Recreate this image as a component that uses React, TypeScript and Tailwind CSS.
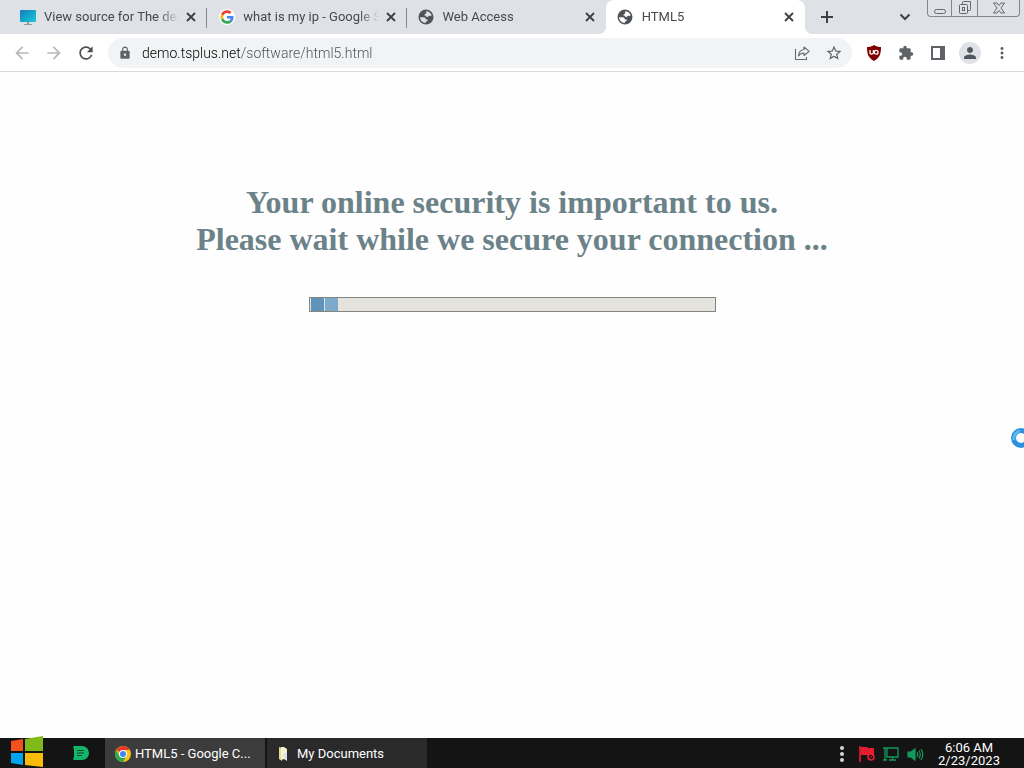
import type { ReactNode } from 'react'
import { MdArrowBack, MdArrowForward, MdExtension, MdLock, MdMoreVert, MdPerson, MdRefresh, MdStarBorder } from 'react-icons/md'

function MonitorIcon() {
  return (
    <svg width="16" height="16" viewBox="0 0 16 16">
      <defs>
        <linearGradient id="screen" x1="0" y1="0" x2="1" y2="1">
          <stop offset="0" stopColor="#1a78bd" />
          <stop offset="0.5" stopColor="#12a5c9" />
          <stop offset="1" stopColor="#1fc4d6" />
        </linearGradient>
      </defs>
      <rect x="0" y="1" width="16" height="12" rx="1" fill="url(#screen)" />
      <path d="M7 13h2v2h3v1H4v-1h3z" fill="#8f9aa5" />
    </svg>
  )
}

function GoogleIcon() {
  return (
    <svg width="16" height="16" viewBox="0 0 48 48">
      <circle cx="24" cy="24" r="24" fill="#fff" />
      <g transform="translate(4 4) scale(0.84)">
        <path fill="#EA4335" d="M24 9.5c3.5 0 6.700 1.200 9.200 3.600l6.900-6.900C35.900 2.400 30.500 0 24 0 14.600 0 6.500 5.400 2.600 13.200l8 6.200C12.400 13.700 17.700 9.500 24 9.500z" />
        <path fill="#4285F4" d="M47 24.500c0-1.600-.2-3.100-.4-4.500H24v9h12.900c-.6 3-2.200 5.500-4.700 7.200l7.700 6C44.400 38 47 31.800 47 24.500z" />
        <path fill="#FBBC05" d="M10.500 28.600A14.500 14.500 0 0 1 10.500 19.400l-8-6.200a24 24 0 0 0 0 21.600z" />
        <path fill="#34A853" d="M24 48c6.500 0 11.900-2.100 15.900-5.800l-7.700-6c-2.200 1.500-4.900 2.300-8.200 2.300-6.300 0-11.600-4.200-13.500-9.900l-8 6.200C6.500 42.600 14.600 48 24 48z" />
      </g>
    </svg>
  )
}

function GlobeIcon({ land }: { land: string }) {
  return (
    <svg width="16" height="16" viewBox="0 0 16 16" className="-ml-[2px]">
      <circle cx="8" cy="8" r="7.500" fill="#505357" />
      <path d="M8.200 2.200c2.600.1 4.700 1.700 5.500 4-.8 1-1.900 1-2.700.4-.5 1.300-1.400 1.500-2.600 1.300-.2-1-.8-1.400-2-1.400.2-1.200.8-1.800 1.900-2z" fill={land} />
      <path d="M2.100 8.200h3.300c1.700 0 2.400.9 2.400 2.200h2c0 1.400-.7 2-2 2.200v1.300c-3.100 0-5.600-2.500-5.700-5.700z" fill={land} />
    </svg>
  )
}

function CloseIcon() {
  return (
    <svg width="10" height="10" viewBox="0 0 10 10" stroke="currentColor" strokeWidth="1.800">
      <path d="M1 1l8 8M9 1L1 9" />
    </svg>
  )
}

function PlusIcon() {
  return (
    <svg width="12" height="12" viewBox="0 0 12 12" stroke="currentColor" strokeWidth="2">
      <path d="M6 0v12M0 6h12" />
    </svg>
  )
}

function ChevronIcon() {
  return (
    <svg width="12" height="8" viewBox="0 0 12 8" fill="none" stroke="currentColor" strokeWidth="2">
      <path d="M1.500 1.500L6 6l4.500-4.500" />
    </svg>
  )
}

function ShareIcon() {
  return (
    <svg width="16" height="16" viewBox="0 0 16 16" fill="none" stroke="#65696f" strokeWidth="1.100">
      <path d="M1.500 4v10.500h11V12" />
      <path d="M4.500 11c.3-3.800 2.300-6.200 5.500-6.500V2l5.200 4.300L10 10.500V8c-2.400 0-4.200.9-5.500 3z" strokeLinejoin="round" />
    </svg>
  )
}

function ShieldIcon() {
  return (
    <svg width="16" height="18" viewBox="0 0 16 18">
      <path d="M8 1c2 1.500 4.300 2 7 2 0 6.500-1 10.500-7 14-6-3.500-7-7.500-7-14 2.700 0 5-.5 7-2z" fill="#800000" />
      <g fill="none" stroke="#fff" strokeWidth="1.300">
        <path d="M4 6v2.500a1.700 1.700 0 0 0 3.400 0V6" />
        <circle cx="10.200" cy="8.300" r="1.900" />
      </g>
    </svg>
  )
}

function SidePanelIcon() {
  return (
    <svg width="16" height="16" viewBox="0 0 16 16">
      <rect x="2" y="2" width="12" height="12" fill="none" stroke="#5f6368" strokeWidth="2" />
      <rect x="10" y="2" width="4" height="12" fill="#5f6368" />
    </svg>
  )
}

function WindowsLogo() {
  return (
    <svg width="34" height="32" viewBox="0 0 34 32" className="-mt-[2px]">
      <path d="M1 5l12-2v12H1z" fill="#f1511b" />
      <path d="M15 3l18-3v15H15z" fill="#80b918" />
      <path d="M1 17h12v12L1 27z" fill="#00a4ef" />
      <path d="M15 17h18v14l-18-2z" fill="#fbbc09" />
    </svg>
  )
}

function ChromeIcon() {
  return (
    <svg width="16" height="16" viewBox="0 0 16 16">
      <circle cx="8" cy="8" r="8" fill="#fbc116" />
      <path d="M8 8L1.100 4A8 8 0 0 1 14.900 4H8z" fill="#e33b2e" />
      <path d="M1.100 4A8 8 0 0 0 8 16l3.500-6H4.500z" fill="#2da94f" />
      <circle cx="8" cy="8" r="4" fill="#fff" />
      <circle cx="8" cy="8" r="3" fill="#4285f4" />
    </svg>
  )
}

function FolderIcon() {
  return (
    <svg width="16" height="16" viewBox="0 0 16 16">
      <path d="M4 1l3 1v13l-3-2z" fill="#e3df8e" />
      <path d="M6 1h3l3 2v11l-3-1-3 1z" fill="#f4f5d0" />
      <path d="M8 8l4-2v9l-3-2z" fill="#dbe3ea" />
    </svg>
  )
}

function TrayFlag() {
  return (
    <svg width="18" height="18" viewBox="0 0 18 18">
      <path d="M1 1h2v16H1z" fill="#c8182c" />
      <path d="M3 2h6l1 1h6v8h-6l-1-1H3z" fill="#e81c30" />
      <circle cx="13" cy="12" r="3" fill="#141414" stroke="#e81c30" strokeWidth="1.500" />
      <path d="M11 14l4-4" stroke="#e81c30" />
    </svg>
  )
}

function TrayNetwork() {
  return (
    <svg width="18" height="18" viewBox="0 0 18 18" fill="none" stroke="#159a5c" strokeWidth="1.300">
      <path d="M5 3h11v9H5zM1 3h4M3 3v3M3 6v9M1 15h4M10.500 12v3M7 15h7" />
    </svg>
  )
}

function TraySound() {
  return (
    <svg width="18" height="18" viewBox="0 0 18 18" fill="none" stroke="#159a5c" strokeWidth="1.200">
      <path d="M2 7h3l4-3v11l-4-3H2z" fill="#159a5c" />
      <path d="M11 7q1.500 2.500 0 5M13 5.500q2.500 4 0 8M15 4q3.500 5.500 0 11" />
    </svg>
  )
}

const tabs = [
  { title: 'View source for The demo', icon: <MonitorIcon /> },
  { title: 'what is my ip - Google Search', icon: <GoogleIcon /> },
  { title: 'Web Access', icon: <GlobeIcon land="#dee1e6" /> },
  { title: 'HTML5', icon: <GlobeIcon land="#ffffff" />, active: true },
]

function TabStrip() {
  return (
    <header className="flex h-[34px] items-stretch bg-[#dee1e6] pl-2">
      <div role="tablist" className="flex min-w-0 flex-[0_1_797px]">
        {tabs.map((tab, i) => (
          <div
            key={tab.title}
            className={tab.active
              ? 'relative flex min-w-0 flex-1 items-center rounded-t-lg bg-white pr-2 pl-3'
              : 'relative flex min-w-0 flex-1 items-center pr-2 pl-3'}
          >
            <button role="tab" aria-selected={!!tab.active} className="flex min-w-0 flex-1 items-center gap-2 text-left">
              <span className="flex w-4 shrink-0 justify-center">{tab.icon}</span>
              <span className="flex-1 overflow-hidden mask-r-from-85% text-[13px] leading-5 whitespace-nowrap text-[#45494d]">{tab.title}</span>
            </button>
            <button aria-label="Close tab" className="ml-1 flex w-4 shrink-0 justify-center text-[#3c4043]">
              <CloseIcon />
            </button>
            {i < 2 && <span className="absolute top-2 right-0 h-5 w-px bg-[#85898e]" />}
            {tab.active && (
              <>
                <span className="absolute bottom-0 -left-2 size-2 bg-[radial-gradient(circle_at_0_0,transparent_8px,white_8px)]" />
                <span className="absolute -right-2 bottom-0 size-2 bg-[radial-gradient(circle_at_100%_0,transparent_8px,white_8px)]" />
              </>
            )}
          </div>
        ))}
      </div>
      <button aria-label="New tab" className="ml-3 flex w-5 items-center justify-center text-[#3c4043]">
        <PlusIcon />
      </button>
      <div className="flex-1" />
      <button aria-label="Search tabs" className="mr-3 flex w-5 items-center justify-center text-[#3c4043]">
        <ChevronIcon />
      </button>
      <div className="mr-1 flex h-[17px] w-[93px] rounded-b-sm border border-t-0 border-[#85898e] text-[#64686e]">
        <button aria-label="Minimize" className="flex w-6 items-center justify-center border-r border-[#85898e]">
          <svg width="12" height="14" viewBox="0 0 12 14" fill="none" stroke="currentColor">
            <rect x="0.500" y="8.500" width="11" height="4" rx="2" />
          </svg>
        </button>
        <button aria-label="Restore" className="flex w-[26px] items-center justify-center border-r border-[#85898e]">
          <svg width="14" height="14" viewBox="0 0 14 14" fill="none" stroke="currentColor">
            <path d="M4.500 3.500v-2a1 1 0 0 1 1-1h7v8a1 1 0 0 1-1 1h-2" />
            <rect x="1.500" y="3.500" width="8" height="9" rx="1" />
            <rect x="4.500" y="6.500" width="2" height="3" />
          </svg>
        </button>
        <button aria-label="Close" className="flex flex-1 items-center justify-center">
          <svg width="12" height="12" viewBox="0 0 12 12" fill="none" stroke="currentColor">
            <path d="M.5 1h3.500l2 2.500L8 1h3.500L8 6l3.500 5H8L6 8.500 4 11H.5L4 6z" />
          </svg>
        </button>
      </div>
    </header>
  )
}

function ToolButton({ label, children }: { label: string; children: ReactNode }) {
  return (
    <button aria-label={label} className="flex size-8 shrink-0 items-center justify-center text-[#5f6368]">
      {children}
    </button>
  )
}

function Toolbar() {
  return (
    <nav className="flex h-[38px] items-center border-b border-[#d8dadd] bg-white px-[6px]">
      <ToolButton label="Back"><MdArrowBack size={20} className="text-[#b4b7bb]" /></ToolButton>
      <ToolButton label="Forward"><MdArrowForward size={20} className="text-[#b4b7bb]" /></ToolButton>
      <ToolButton label="Reload"><MdRefresh size={20} className="text-[#4c5054]" /></ToolButton>
      <div className="mx-[6px] flex h-[30px] min-w-0 flex-1 items-center rounded-full bg-[#f1f3f4] pr-[2px] pl-[10px]">
        <MdLock size={14} className="mr-[10px] shrink-0 text-[#5f6368]" />
        <input
          aria-label="Address"
          defaultValue="demo.tsplus.net/software/html5.html"
          className="min-w-0 flex-1 bg-linear-to-r from-black from-[99px] to-[#4a4e53] to-[99px] bg-clip-text text-sm font-light text-transparent outline-none"
        />
        <ToolButton label="Share"><ShareIcon /></ToolButton>
        <ToolButton label="Bookmark"><MdStarBorder size={18} /></ToolButton>
      </div>
      <ToolButton label="uBlock"><ShieldIcon /></ToolButton>
      <ToolButton label="Extensions"><MdExtension size={16} /></ToolButton>
      <ToolButton label="Side panel"><SidePanelIcon /></ToolButton>
      <ToolButton label="Profile">
        <span className="flex size-[22px] items-center justify-center rounded-full bg-[#dee1e6]">
          <MdPerson size={18} className="text-[#50565e]" />
        </span>
      </ToolButton>
      <ToolButton label="Menu"><MdMoreVert size={18} /></ToolButton>
    </nav>
  )
}

function Taskbar() {
  return (
    <footer className="flex h-[30px] items-center bg-[#141414] text-white">
      <button aria-label="Start" className="ml-[10px]"><WindowsLogo /></button>
      <button aria-label="Dashboard" className="flex w-[61px] justify-center pl-[12px]">
        <svg width="16" height="14" viewBox="0 0 16 14">
          <path d="M1 0h8a7 7 0 0 1 0 14H1l-1-1 1-2V3L0 1z" fill="#12b76a" />
          <path d="M4 4.500h7M4 7h7M4 9.500h5" stroke="#14432e" strokeWidth="1.200" />
        </svg>
      </button>
      <button className="flex h-full w-40 items-center gap-1 bg-[#3c3c3c] px-[10px] pt-px text-[13px] whitespace-nowrap">
        <ChromeIcon />
        HTML5 - Google C...
      </button>
      <button className="ml-[2px] flex h-full w-40 items-center gap-[6px] bg-[#2a2a2a] px-2 pt-px text-[13px]">
        <FolderIcon />
        My Documents
      </button>
      <div className="flex-1" />
      <div className="flex items-center gap-[6px] pt-[2px]">
        <svg width="6" height="18" viewBox="0 0 6 18" fill="#d6d6d6" className="mr-[7px]">
          <circle cx="3" cy="3" r="2" />
          <circle cx="3" cy="9" r="2" />
          <circle cx="3" cy="15" r="2" />
        </svg>
        <TrayFlag />
        <TrayNetwork />
        <TraySound />
      </div>
      <div className="mr-5 ml-[10px] w-[70px] pt-px text-center text-[13px] leading-[13px]">
        <div>6:06 AM</div>
        <div>2/23/2023</div>
      </div>
    </footer>
  )
}

export default function App() {
  return (
    <div className="flex min-h-screen flex-col bg-[#fefefe] font-['Roboto',sans-serif]">
      <TabStrip />
      <Toolbar />
      <main className="flex flex-1 flex-col items-center px-4 pt-28">
        <h1 className="text-center font-['Liberation_Serif',serif] text-[32px] leading-[37px] font-bold text-[#6b8288]">
          Your online security is important to us.
          <br />
          Please wait while we secure your connection ...
        </h1>
        <div role="progressbar" aria-label="Securing connection" aria-valuenow={7} className="mt-[39px] flex h-[15px] w-[407px] max-w-full gap-px border border-[#85857f] bg-[#e5e3dd] pl-px">
          <span className="w-[13px] bg-[#5f93b9] shadow-[1px_0_0_#d5e4ee]" />
          <span className="w-[13px] bg-[#7caac8]" />
        </div>
      </main>
      <svg width="20" height="20" viewBox="0 0 20 20" className="fixed top-[428px] -right-[7px]" fill="none">
        <circle cx="10" cy="10" r="7.500" stroke="#2b90e0" strokeWidth="5" />
        <path d="M3 12a7.500 7.500 0 0 1 6-9" stroke="#58b8f2" strokeWidth="3" />
      </svg>
      <Taskbar />
    </div>
  )
}
